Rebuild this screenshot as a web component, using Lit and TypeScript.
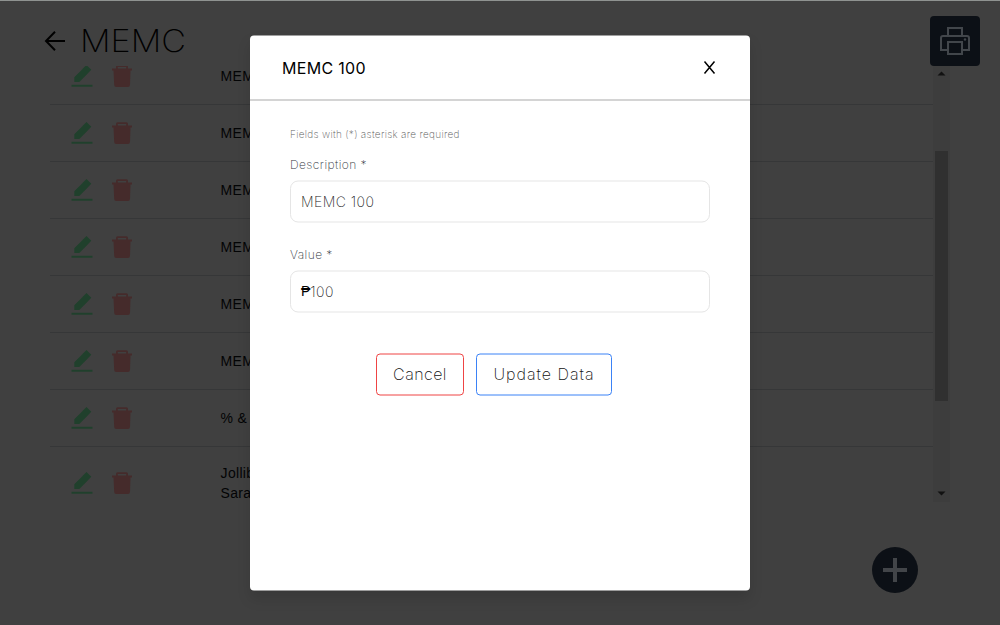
import { LitElement, html, css } from "lit";
import { customElement } from "lit/decorators.js";

const rows: { lines: string[]; tall?: boolean }[] = [
  { lines: ["MEMC 50"] },
  { lines: ["MEMC 100"] },
  { lines: ["MEMC 150"] },
  { lines: ["MEMC 200"] },
  { lines: ["MEMC 250"] },
  { lines: ["MEMC 300"] },
  { lines: ["% & Up"] },
  { lines: ["Jollibee", "Sarap"], tall: true },
];

@customElement("app-root")
export class AppRoot extends LitElement {
  static styles = css`
    :host { display: block; width: 1000px; height: 625px; overflow: hidden; position: relative;
      background: #404040; box-sizing: border-box; border-top: 1px solid #8f9391;
      font-family: Inter, "Liberation Sans", sans-serif; font-weight: 300; color: #000; }
    * { box-sizing: border-box; }
    svg { display: block; }
    .top { display: flex; align-items: flex-start; height: 65px; padding: 15px 20px 0 42px; }
    .back { margin-top: 12px; width: 26px; height: 26px; }
    h1 { margin: 4px 0 0 12px; font-size: 31px; line-height: 42px; font-weight: 200; flex: 1; letter-spacing: 0; transform: scaleX(1.1); transform-origin: 0 50%; }
    .print { width: 50px; height: 50px; border-radius: 4px; background: #0c1016; padding: 9px; }
    .list { display: flex; width: 900px; height: 436px; margin-left: 50px; overflow: hidden; }
    .rows { flex: 1; margin-top: -18px; }
    .row { height: 57px; border-bottom: 1px solid #363738; display: flex; align-items: center; padding-left: 20px; }
    .row.tall { height: 72px; border: 0; }
    .row svg { margin-right: 16px; width: 24px; height: 24px; flex: none; }
    .name { margin-left: 70.6px; font: 400 14px/20px "Liberation Sans", Arial, sans-serif; letter-spacing: .3px; color: #030405; white-space: nowrap; }
    .scroll { width: 17px; background: #3d3d3d; display: flex; flex-direction: column; align-items: center; }
    .scroll svg { width: 17px; height: 17px; margin-top: -1.500px; }
    .thumb { width: 13px; height: 250px; margin-top: 69.500px; background: #303030; }
    .scroll .down { margin-top: auto; }
    .add { position: absolute; left: 872px; top: 546px; width: 46px; height: 46px; border-radius: 50%; background: #0c1016; }
    .modal { position: absolute; left: 250px; top: 35px; width: 500px; height: 555px; transform: translateY(-.5px); background: #fff; border-radius: 4px; box-shadow: 0 8px 14px rgba(0,0,0,.12); }
    .head { height: 65px; border-bottom: 1px solid #aaa; display: flex; justify-content: space-between; align-items: center; padding: 0 34px 0 32px; }
    .title { font-size: 16px; font-weight: 400; line-height: 20px; letter-spacing: .3px; padding-bottom: 1px; }
    .body { padding: 25px 40px; display: flex; flex-direction: column; }
    .hint { font-size: 10px; line-height: 16px; color: #606060; letter-spacing: .3px; }
    label { font-size: 12px; line-height: 16px; color: #30363d; margin-top: 15px; letter-spacing: .42px; }
    .field { height: 42px; border: 1px solid #e5e5e5; border-radius: 8px; margin-top: 8px; padding: 0 10px 2px; display: flex; align-items: center; font-size: 14px; color: #222; letter-spacing: .45px; }
    .field + label { margin-top: 24px; }
    .peso { font-family: "Liberation Sans", sans-serif; font-weight: 400; color: #000; letter-spacing: 0; }
    .hint, label, .field { font-weight: 200; }
    .actions { display: flex; gap: 12px; margin: 41px 0 0 86px; }
    button { height: 42px; padding: 0 0 2px; background: #fff; border: 1px solid #ef4444; border-radius: 4px; font: 200 16px/20px Inter, sans-serif; color: #111; width: 88px; letter-spacing: .45px; white-space: nowrap; }
    button.update { width: 136px; border-color: #3b82f6; letter-spacing: 1px; }
  `;

  private arrow(d: string, cls: string) {
    return html`<svg class=${cls} viewBox="0 0 17 17"><path d=${d} fill="#111" /></svg>`;
  }

  render() {
    return html`
      <div class="top">
        <svg class="back" viewBox="0 0 26 26" fill="none" stroke="#000" stroke-width="2"><path d="M23 13H5M13 3.8L4 13l9 9.2" /></svg>
        <h1>MEMC</h1>
        <div class="print">
          <svg viewBox="0 0 32 32" width="32" height="32" fill="none" stroke="#42464b" stroke-width="2">
            <path d="M9 10V3h14v7M9 25H2V13q0-2 2-2h24q2 0 2 2v12h-7M9 17h14v12H9z" /><circle cx="26" cy="14.500" r="1.200" fill="#42464b" stroke="none" />
          </svg>
        </div>
      </div>
      <div class="list">
        <div class="rows">
          ${rows.map((r) => html`<div class="row ${r.tall ? "tall" : ""}">
            <svg viewBox="0 0 24 24" fill="#20402c"><path d="M1.500 20.800h21v2h-21zM4.300 18v-4.800L12.600 4.900l4.900 4.900L9.300 18zM12.400 5.100L16.500 1l4.800 4.800-4.100 4.100z" /></svg>
            <svg viewBox="0 0 24 24" fill="#452b2b"><path fill-rule="evenodd" d="M6 4.500V3Q6 1.300 7.500 1.300h9Q18 1.300 18 3V4.500h4v2h-1.500l-.5 14.500q-.1 2-2 2H6.200q-1.900 0-2-2L3.500 6.500H2v-2zm1.800 0h8.400V2.900H7.800z" /></svg>
            <div class="name">${r.lines.map((l) => html`<div>${l}</div>`)}</div>
          </div>`)}
        </div>
        <div class="scroll">
          ${this.arrow("M4.500 10.500h8l-4-4z", "up")}
          <div class="thumb"></div>
          ${this.arrow("M4.500 6.500h8l-4 4z", "down")}
        </div>
      </div>
      <div class="add"><svg viewBox="0 0 46 46" stroke="#424549" stroke-width="4"><path d="M23 11v24M11 23h24" /></svg></div>
      <div class="modal">
        <div class="head">
          <span class="title">MEMC 100</span>
          <svg width="13" height="14" viewBox="0 0 13 14" stroke="#000" stroke-width="1.500" fill="none"><path d="M1.500 1l10 12M11.500 1L1.500 13" /></svg>
        </div>
        <div class="body">
          <div class="hint">Fields with (*) asterisk are required</div>
          <label>Description *</label>
          <div class="field">MEMC 100</div>
          <label>Value *</label>
          <div class="field"><span class="peso">₱</span>100</div>
          <div class="actions"><button>Cancel</button><button class="update">Update Data</button></div>
        </div>
      </div>
    `;
  }
}
